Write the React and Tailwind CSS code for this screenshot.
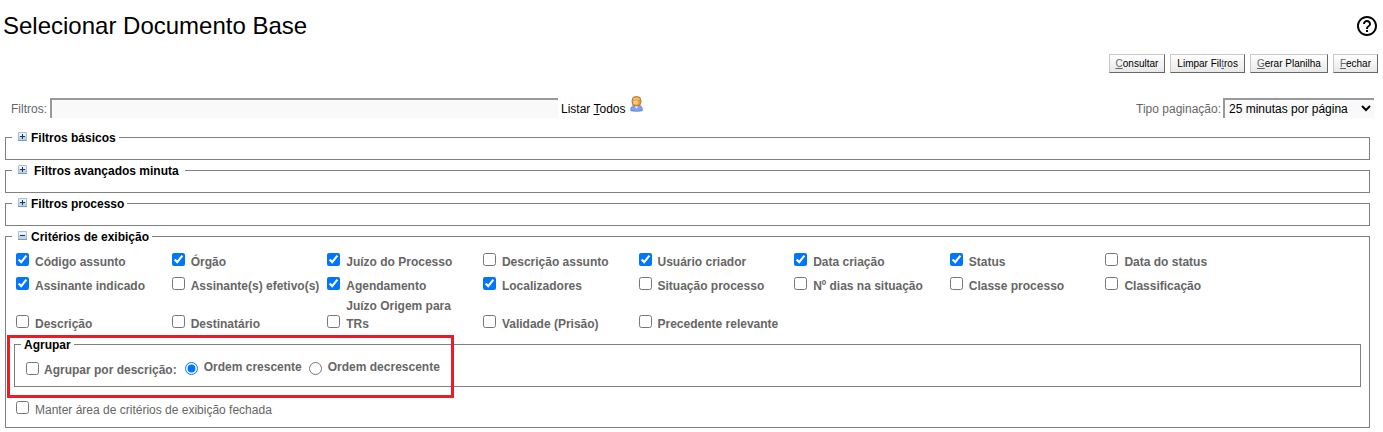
import React from "react";

const criteria = [
  ["Código assunto", true],
  ["Órgão", true],
  ["Juízo do Processo", true],
  ["Descrição assunto", false],
  ["Usuário criador", true],
  ["Data criação", true],
  ["Status", true],
  ["Data do status", false],
  ["Assinante indicado", true],
  ["Assinante(s) efetivo(s)", false],
  ["Agendamento", true],
  ["Localizadores", true],
  ["Situação processo", false],
  ["Nº dias na situação", false],
  ["Classe processo", false],
  ["Classificação", false],
  ["Descrição", false],
  ["Destinatário", false],
  ["Juízo Origem para TRs", false],
  ["Validade (Prisão)", false],
  ["Precedente relevante", false],
];

function ToggleIcon({ open }) {
  return (
    <svg className="block" width="9" height="9" viewBox="0 0 9 9" aria-hidden="true">
      <rect width="9" height="9" rx="1" fill="#a9bdd4" />
      <rect x="1" y="1" width="7" height="3" fill="#e9f0f8" />
      <rect x="1" y="4" width="7" height="4" fill="#c3d3e6" />
      <rect x="2" y="4" width="5" height="1" fill="#17375e" />
      {!open && <rect x="4" y="2" width="1" height="5" fill="#17375e" />}
      <rect y="8" width="9" height="1" fill="#7f9abb" />
    </svg>
  );
}

function UserIcon() {
  return (
    <svg width="14" height="16" viewBox="0 0 14 16" aria-hidden="true">
      <path d="M0.8 14.8 C0.4 11.5 2 9.600 4.500 9 L8.500 9 C11.500 9.600 12.700 11.500 12.200 14.800 Q6.500 15.800 0.800 14.800Z" fill="#7fa2ea" stroke="#4f72c4" strokeWidth="0.7" />
      <path d="M4.500 9.200 L6.500 13 L8.500 9.200Z" fill="#f4f8ff" />
      <rect x="2" y="0.500" width="9" height="9.500" rx="4" fill="#e39a3c" stroke="#b0712a" strokeWidth="0.8" />
      <path d="M3 4 C3.500 0.800 9 0.800 10 4 Q6.500 2.800 3 4Z" fill="#f2c069" />
      <rect x="3.200" y="4.200" width="5.200" height="4.200" rx="2" fill="#fbc888" />
    </svg>
  );
}

function HelpIcon() {
  return (
    <svg width="24" height="24" viewBox="0 0 24 24" fill="currentColor" aria-hidden="true">
      <path d="M11 18h2v-2h-2v2zm1-16C6.480 2 2 6.480 2 12s4.480 10 10 10 10-4.480 10-10S17.520 2 12 2zm0 18c-4.410 0-8-3.590-8-8s3.590-8 8-8 8 3.590 8 8-3.590 8-8 8zm0-14c-2.210 0-4 1.790-4 4h2c0-1.100.9-2 2-2s2 .9 2 2c0 2-3 1.750-3 5h2c0-2.250 3-2.500 3-5 0-2.210-1.790-4-4-4z" />
    </svg>
  );
}

function Key({ children }) {
  return <u className="text-[#666]">{children}</u>;
}

function ActionButton({ children }) {
  return (
    <button
      type="button"
      className="h-[19px] border border-t-[#c8c8c8] border-l-[#c8c8c8] border-r-[#666] border-b-[#666] bg-gradient-to-b from-white to-[#e8e8e8] px-1.5 text-[10px] leading-4 text-black"
    >
      {children}
    </button>
  );
}

function Panel({ title, open = false, spaced = false, children }) {
  return (
    <fieldset className={"mb-0.5 min-w-0 border border-[#808080] " + (open ? "pb-2.5" : "pb-3.5")}>
      <legend className="ml-1.5 px-[3px] pt-0.5 leading-[14px]">
        <button type="button" aria-expanded={open} className="flex gap-1 pl-[3px] font-bold text-black">
          <span className="pt-px">
            <ToggleIcon open={open} />
          </span>
          <span className={spaced ? "px-[3px]" : ""}>{title}</span>
        </button>
      </legend>
      {children}
    </fieldset>
  );
}

export default function App() {
  return (
    <main className="bg-white font-['Liberation_Sans',Arial,sans-serif] text-[12px] leading-[14px] text-[#666]">
      <header className="flex items-center justify-between pt-3 pr-1 pl-[3px]">
        <h1 className="text-2xl leading-7 text-black">Selecionar Documento Base</h1>
        <a href="#ajuda" aria-label="Ajuda" className="text-black">
          <HelpIcon />
        </a>
      </header>

      <div className="mt-3.5 flex justify-end gap-[5px] pr-[5px]">
        <ActionButton><Key>C</Key>onsultar</ActionButton>
        <ActionButton>Limpar Fil<Key>t</Key>ros</ActionButton>
        <ActionButton><Key>G</Key>erar Planilha</ActionButton>
        <ActionButton><Key>F</Key>echar</ActionButton>
      </div>

      <form className="mt-[25px] pl-[5px]">
        <div className="flex items-center justify-between pr-[9px] pl-1.5">
          <div className="flex items-center gap-[3px]">
            <label htmlFor="filtros" className="pt-0.5">Filtros:</label>
            <input
              id="filtros"
              type="text"
              className="h-5 w-[508px] border-t-2 border-l-2 border-[#999] bg-[#f9f9f9] px-1 text-black"
            />
            <a href="#todos" className="flex items-center gap-1 text-black">
              <span className="pt-0.5">Listar <u>T</u>odos</span>
              <span className="-mt-2"><UserIcon /></span>
            </a>
          </div>
          <div className="flex items-center gap-0.5">
            <label htmlFor="paginacao" className="pt-0.5">Tipo paginação:</label>
            <select
              id="paginacao"
              className="h-5 w-[151px] border-t-2 border-l-2 border-[#999] bg-[#f9f9f9] text-black"
            >
              <option>25 minutas por página</option>
            </select>
          </div>
        </div>

        <div className="mt-[11px] pr-[13px]">
          <Panel title="Filtros básicos" />
          <Panel title="Filtros avançados minuta" spaced />
          <Panel title="Filtros processo" />
          <Panel title="Critérios de exibição" open>
            <div className="grid grid-cols-8 gap-y-0.5 pt-[5px] pr-[108px] pl-2.5 font-bold">
              {criteria.map(([name, on], i) => (
                <div key={name} className="flex min-h-[22px] items-end gap-1.5">
                  <input id={"crit-" + i} type="checkbox" defaultChecked={on} className="mb-[5px] size-[13px] shrink-0" />
                  <label htmlFor={"crit-" + i} className="pr-1.5 leading-[18px]">
                    {name}
                  </label>
                </div>
              ))}
            </div>

            <div className="relative mx-2 mt-[3px]">
              <fieldset className="min-w-0 border border-[#808080] pb-[9px]">
                <legend className="ml-1.5 px-[3px] pt-0.5 leading-[14px] font-bold text-black">Agrupar</legend>
                <div className="flex items-center pt-[7px] pl-[11px] font-bold">
                  <input id="agrupar" type="checkbox" className="size-[13px]" />
                  <label htmlFor="agrupar" className="pt-1 pl-[5px]">Agrupar por descrição:</label>
                  <input id="crescente" type="radio" name="ordem" defaultChecked className="ml-2 size-[13px]" />
                  <label htmlFor="crescente" className="pb-0.5 pl-1.5">Ordem crescente</label>
                  <input id="decrescente" type="radio" name="ordem" className="ml-[7px] size-[13px]" />
                  <label htmlFor="decrescente" className="pb-0.5 pl-1.5">Ordem decrescente</label>
                </div>
              </fieldset>
              <div className="pointer-events-none absolute -top-px -left-[7px] h-[63px] w-[447px] border-3 border-[#ed1c24]" />
            </div>

            <div className="mt-3.5 flex items-start gap-1.5 pl-2.5">
              <input id="manter" type="checkbox" className="size-[13px]" />
              <label htmlFor="manter" className="pt-0.5">Manter área de critérios de exibição fechada</label>
            </div>
          </Panel>
        </div>
      </form>
    </main>
  );
}
